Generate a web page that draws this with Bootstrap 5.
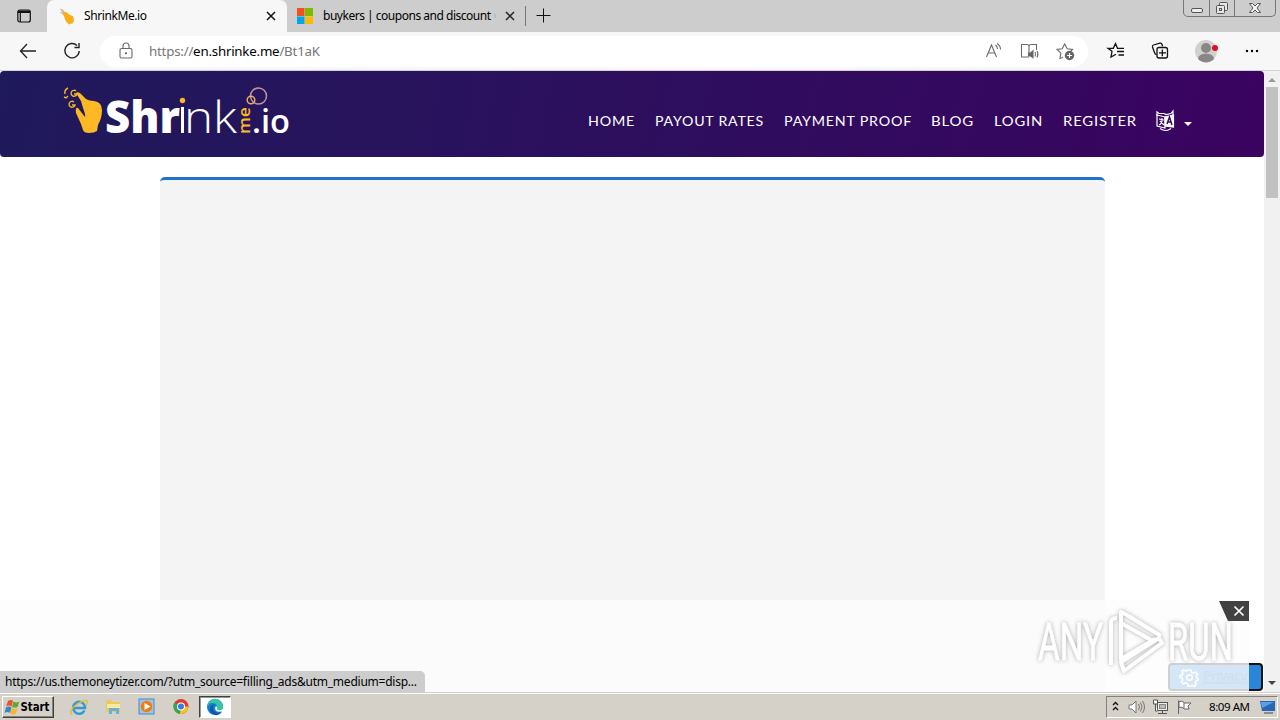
<!DOCTYPE html>
<html lang="en">
<head>
    <meta charset="UTF-8">
    <meta name="viewport" content="width=device-width, initial-scale=1.0">
    <title>ShrinkMe.io</title>
    <link href="https://cdn.jsdelivr.net/npm/bootstrap@5.3.0/dist/css/bootstrap.min.css" rel="stylesheet">
    <style>
        body { width: 1280px; height: 720px; font-family: "Noto Sans", "Open Sans", sans-serif; font-size: 12px; line-height: 16px; color: #000; background: #fff; }
        svg { display: block; flex: none; overflow: visible; }
        svg text { white-space: pre; }

        /* browser chrome */
        .tab-strip { height: 32px; background: #cdcdcd; }
        .tab-menu { width: 47px; border-bottom-right-radius: 6px; }
        .tab-active { width: 240px; background: #f7f7f7; border-radius: 7px 7px 0 0; padding-left: 12px; padding-right: 10px; }
        .tab-other { width: 239px; padding-left: 9px; padding-right: 9px; border-right: 1px solid #777; height: 20px; margin-top: 6px; }
        .win-buttons { width: 93px; height: 17px; border: 1px solid #777; border-top: 0; border-radius: 0 0 5px 5px; margin-right: 4px; }
        .win-buttons > div + div { border-left: 1px solid #777; }
        .toolbar { height: 39px; background: #f7f7f7; border-bottom: 1px solid #d2d2d8; }
        .address { width: 988px; height: 31px; border-radius: 16px; background: #fff; margin-left: 19px; padding: 0 13px 0 18px; }

        /* page */
        .page { height: 621px; background: #fff; }
        .site-nav { height: 86px; border-radius: 4px; padding-left: 60px; background: linear-gradient(100deg, #1f1a5b, #3a0360); }
        .menu { grid-template-columns: 67px 129px 147px 63px 69px 93px 28px 80px; padding-top: 14px; font-family: Lato, sans-serif; font-size: 13px; color: #fff; }
        .menu text { letter-spacing: .7px; }
        .content-box { width: 945px; height: 515px; margin: 20px 0 0 160px; background: #f4f4f4; border-top: 3px solid #1f73cf; border-radius: 5px 5px 0 0; }
        .scroll { width: 16px; background: #f1f1f1; }
        .thumb { width: 12px; height: 111px; background: #c1c1c1; }
        .privacy { right: 1px; bottom: 1px; width: 95px; height: 28px; background: #2a86db; border: 2px solid #111; border-radius: 4px; }
        .ad-bar { left: 0; bottom: 0; width: 1249px; height: 92px; background: rgba(252, 252, 252, .81); }
        .watermark { left: 1030px; bottom: 15px; opacity: .8; filter: drop-shadow(0 0 2px #999); }
        .status-url { left: 0; bottom: 0; width: 425px; height: 21px; background: #cdcdcd; border-top-right-radius: 5px; padding: 2px 5px; }

        /* taskbar */
        .taskbar { height: 28px; background: #d5d0c8; border-top: 1px solid #d5d0c8; box-shadow: inset 0 1px #fff; padding: 3px 2px 2px; }
        .start-btn { width: 52px; height: 22px; padding-left: 1px; border: 1px solid; border-color: #fff #404040 #404040 #fff; box-shadow: inset -1px -1px #87837c; }
        .task-active { width: 32px; height: 22px; background: #fff; border: 1px solid; border-color: #404040 #fff #fff #404040; box-shadow: inset 1px 1px #999; }
        .tray { width: 172px; height: 22px; border: 1px solid; border-color: #85817a #fff #fff #85817a; padding-left: 5px; }
    </style>
</head>
<body class="d-flex flex-column overflow-hidden">
    <header>
        <div class="tab-strip d-flex">
            <div class="tab-menu d-flex align-items-center ps-3">
                <svg width="16" height="16" fill="none" stroke="#111" stroke-width="1.200"><rect x="1.800" y="2" width="12.500" height="12" rx="2"/><path d="M2 3.800h12" stroke-width="2.400"/><path d="M4.300 5v9"/></svg>
            </div>
            <div class="tab-active d-flex align-items-center">
                <svg width="16" height="17"><path d="M2 2l3 1.500 3 1 3 2.500 3 1 1 4-1 3-4 1.500-3-3-2-5z" fill="#f9ad19"/><path d="M1 1l4 2M1 4l4 3M3 1l1 4" stroke="#bbb"/></svg>
                <svg class="ms-2" width="70" height="18"><text x="1" y="13" textLength="63">ShrinkMe.io</text></svg>
                <svg class="ms-auto" width="12" height="12" stroke="#111" stroke-width="1.500"><path d="M2 2l8 8M10 2l-8 8"/></svg>
            </div>
            <div class="tab-other d-flex align-items-center">
                <svg width="17" height="17"><path d="M1 0h7.500v8H1z" fill="#f25022"/><path d="M9 0h8v8H9z" fill="#7fba00"/><path d="M1 8.500h7.500V16H1z" fill="#00a4ef"/><path d="M9 8.500h8V16H9z" fill="#ffb900"/></svg>
                <svg class="ms-2" width="176" height="18"><text x="2" y="13" textLength="168">buykers | coupons and discount</text><path d="M174 7v4" stroke="#aaa"/></svg>
                <svg class="ms-auto" width="12" height="12" stroke="#222" stroke-width="1.500"><path d="M2 2l8 8M10 2l-8 8"/></svg>
            </div>
            <svg class="mt-2" width="18" height="16" style="margin-left: 9px" stroke="#111"><path d="M1.500 7.500h14M8.500 .5v14"/></svg>
            <div class="win-buttons d-flex ms-auto">
                <div class="d-flex justify-content-center" style="width: 25px"><svg width="14" height="15" fill="#eee" stroke="#555"><rect x="1.500" y="8.500" width="11" height="4" rx="1.500"/></svg></div>
                <div class="d-flex justify-content-center" style="width: 25px"><svg width="14" height="15" fill="#e5e5e5" stroke="#555"><rect x="4.500" y="2.500" width="8" height="8" rx="1"/><rect x="1.500" y="5.500" width="8" height="8" rx="1"/><rect x="4.500" y="8.500" width="2" height="2"/></svg></div>
                <div class="d-flex justify-content-center flex-fill"><svg width="14" height="15" fill="#f4f4f4" stroke="#555"><path d="M1.500 3.500h3L7 6l2.500-2.500h3L9 8l3.500 4.500h-3L7 10l-2.500 2.500h-3L5 8z"/></svg></div>
            </div>
        </div>
        <div class="toolbar d-flex align-items-center">
            <svg width="18" height="18" style="margin-left: 19px" fill="none" stroke="#222" stroke-width="1.300"><path d="M17 9H1.500M8 2L1.500 9 8 16"/></svg>
            <svg width="18" height="18" style="margin-left: 26px" fill="none" stroke="#222" stroke-width="1.400"><path d="M14 3.500A7.200 7.200 0 1 0 16.200 9M16 1v4.500h-4.500"/></svg>
            <div class="address d-flex align-items-center">
                <svg width="16" height="18" fill="none" stroke="#6a6a6a" stroke-width="1.100"><rect x="2" y="6.500" width="12" height="9.500" rx="1.500"/><path d="M5 6.500V4a3 3 0 0 1 6 0v2.500"/><circle cx="8" cy="11.300" r=".6" fill="#555"/></svg>
                <svg class="ms-3" width="180" height="22" font-size="13.300"><text y="16" x="-1" textLength="171" fill="#757575">https://<tspan fill="#000">en.shrinke.me</tspan>/Bt1aK</text></svg>
                <svg class="ms-auto" width="18" height="18" fill="none" stroke="#6a6a6a" stroke-width="1.100"><path d="M2.500 15L7.500 3l5 12M4.300 11h6.500M11.500 3q2 1.500 2 4M13 1.500q3.500 2 3.500 6"/></svg>
                <svg width="20" height="18" style="margin-left: 17px" fill="none" stroke="#6a6a6a" stroke-width="1.100"><path d="M10 15H2.500V2.500H8q2 0 2 2V12M10 4.500q0-2 2-2h5.500V8"/><path d="M9.500 11h2l2.500-2.200v7L11.500 14h-2z" fill="#666"/><path d="M16 10q1.200 2.200 0 4.500M18 9q1.800 3.200 0 6.500"/></svg>
                <svg width="19" height="19" style="margin-left: 17px" fill="none" stroke="#6a6a6a" stroke-width="1.100"><path d="M7 15.500l-3 1 .8-5.300L1 7.500l5.200-.8L8.700 2l2.500 4.700 5.300.8-1.500 1.500"/><circle cx="13.500" cy="13.500" r="4.700" fill="#666" stroke="none"/><path d="M11 13.500h5M13.500 11v5" stroke="#fff"/></svg>
            </div>
            <svg width="18" height="18" style="margin-left: 19px" fill="none" stroke="#111" stroke-width="1.300"><path d="M9 12.200L4 15l1-5.700L1 6.300h5.300L8.500 1.500l2 4.800H17M10 9.500h7M11.500 13H17"/></svg>
            <svg width="18" height="18" style="margin-left: 26px" fill="none" stroke="#111" stroke-width="1.300"><path d="M5.500 12.500q-1.500 0-2-2L1.500 5q-.4-1.600 1-2L9 1.200q1.500-.4 2 1l.6 2"/><rect x="6" y="5.500" width="10.500" height="10.500" rx="2"/><path d="M8 10.800h7M11.300 7.500v6.800"/></svg>
            <svg width="24" height="24" style="margin-left: 25px"><circle cx="12" cy="12" r="11" fill="#d2d0ce"/><circle cx="12" cy="9" r="5" fill="#898785"/><path d="M4 20a8 5.500 0 0 1 16 0 11 11 0 0 1-16 0" fill="#898785"/><circle cx="21" cy="9" r="3" fill="#e01020"/></svg>
            <svg width="16" height="6" style="margin-left: 26px"><circle cx="3" cy="3" r="1.200"/><circle cx="8" cy="3" r="1.200"/><circle cx="13" cy="3" r="1.200"/></svg>
        </div>
    </header>

    <div class="page d-flex position-relative">
        <main class="position-relative" style="width: 1264px">
            <nav class="site-nav d-flex align-items-center">
                <!-- logo -->
                <svg width="236" height="60" viewBox="60 82 236 60" style="margin-top: -4px">
                    <path d="M76 93q2-2 5 1l5 5q3 2 8 2 8 1 8 9 0 8-4 15l-1 6q-3 2-8 2-5 0-6-3l-2-6-5-11q-1-6 2-5l7 9q1-1-2-9l-2-7z" fill="#fcb924"/>
                    <g fill="none" stroke="#f5b32b" stroke-width="1.400"><path d="M68 88q-4 2-3 6M64 97l2 1 2-2M76 91a3 3 0 1 0 1 3h-3"/><path d="M74 102a3 3 0 1 0 1 3h-3"/></g>
                    <g fill="#fff" font-family="Open Sans, sans-serif">
                        <text x="105" y="133" font-size="45" font-weight="800" textLength="75" lengthAdjust="spacingAndGlyphs">Shr</text>
                        <text x="184" y="133" font-size="45" font-weight="300" textLength="53" lengthAdjust="spacingAndGlyphs">nk</text>
                        <text x="252" y="133" font-size="33" font-weight="600" textLength="38" lengthAdjust="spacingAndGlyphs">.io</text>
                        <path d="M181 107h3v26h-3z"/>
                        <text transform="translate(249.500 134) rotate(-90)" fill="#fcb924" font-size="16" font-weight="600" textLength="27" lengthAdjust="spacingAndGlyphs">me</text>
                    </g>
                    <circle cx="182.500" cy="100.500" r="2.700" fill="#fcb924"/>
                    <g fill="none" stroke-width="1.500"><circle cx="258.500" cy="96" r="8" stroke="#c29498"/><circle cx="251" cy="100" r="3.800" stroke="#e6ad60"/></g>
                </svg>
                <div class="menu d-grid align-items-center" style="margin-left: 292px">
                    <svg width="60" height="18" fill="#fff"><text y="14" textLength="47" lengthAdjust="spacingAndGlyphs">HOME</text></svg>
                    <svg width="120" height="18" fill="#fff"><text y="14" textLength="109" lengthAdjust="spacingAndGlyphs">PAYOUT RATES</text></svg>
                    <svg width="140" height="18" fill="#fff"><text y="14" textLength="128" lengthAdjust="spacingAndGlyphs">PAYMENT PROOF</text></svg>
                    <svg width="60" height="18" fill="#fff"><text y="14" textLength="43" lengthAdjust="spacingAndGlyphs">BLOG</text></svg>
                    <svg width="60" height="18" fill="#fff"><text y="14" textLength="49" lengthAdjust="spacingAndGlyphs">LOGIN</text></svg>
                    <svg width="85" height="18" fill="#fff"><text y="14" textLength="74" lengthAdjust="spacingAndGlyphs">REGISTER</text></svg>
                    <svg width="20" height="22" fill="none" stroke="#fff" stroke-width="1.200"><path d="M1 6V2l2 1.500h5l2 1 5-1L17 1v4"/><path d="M1 5l8 2v11l-8-2zM3 9l5 1M6 8v2q0 4-3 5M4 11l4 4M4 18.500q6 4 11 0"/><path d="M9 7l8.500-2v12L9 16z" fill="#fff"/><path d="M11 14l2.500-7L16 15M12 12h3" stroke="#33095f" stroke-width="1.500"/></svg>
                    <svg width="9" height="9"><path d="M0 5h8L4 9z" fill="#fff"/></svg>
                </div>
            </nav>
            <div class="content-box"></div>
            <div class="privacy position-absolute d-flex align-items-center">
                <svg width="90" height="24" fill="none" stroke="#fff" stroke-width="1.600"><circle cx="19.500" cy="12.500" r="2.800"/><path d="M18 5h3l.5 2.500 2 .8 2-1.300 2 2-1.300 2 .8 2 1 .5v2l-2 .5-.8 2 1 1.500-2 2-2-1.200-1.700.8L20 21h-2l-.5-2.500-2-.8-2 1.300-2-2 1.300-2-.8-2L10 12.500v-2l2-.5.8-2-1-1.500 2-1.500 2 1 1.700-.8z"/><text x="33" y="16" font-size="14" fill="#1262ac" stroke="none" textLength="45" text-decoration="underline">Privacy</text></svg>
            </div>
        </main>
        <div class="scroll d-flex flex-column align-items-center">
            <svg width="16" height="16"><path d="M4 11l4-4 4 4z" fill="#999"/></svg>
            <div class="thumb"></div>
            <svg class="mt-auto" width="16" height="17"><path d="M4 6h8l-4 4z" fill="#444"/></svg>
        </div>
        <div class="ad-bar position-absolute">
            <svg class="ms-auto" width="30" height="21"><path d="M0 1h30v20H9z" fill="#424242"/><path d="M15.500 6.500l9 9M24.500 6.500l-9 9" stroke="#fff" stroke-width="1.700"/></svg>
        </div>
        <svg class="watermark position-absolute" width="210" height="72" viewBox="1030 604 210 72">
            <g fill="#fff" stroke="#fff" stroke-width=".8" font-family="Roboto, sans-serif" font-size="52">
                <text x="1038" y="659" textLength="65" lengthAdjust="spacingAndGlyphs">ANY</text>
                <text x="1168" y="659" textLength="65" lengthAdjust="spacingAndGlyphs">RUN</text>
            </g>
            <g fill="none" stroke="#fff" stroke-width="4" stroke-linejoin="round"><path d="M1161 635l-34-21-6-3v47l34-20"/><path d="M1121 622l30 17M1117 617q-6 0-6 5v42M1124 670l38-28-3-5-38 24z"/></g>
        </svg>
        <div class="status-url position-absolute">
            <svg width="415" height="18"><text y="13" textLength="412">https://us.themoneytizer.com/?utm_source=filling_ads&amp;utm_medium=disp...</text></svg>
        </div>
    </div>

    <footer class="taskbar d-flex">
        <div class="start-btn d-flex align-items-center">
            <svg width="16" height="16"><path d="M4 2q3-2 5 0L7.500 7.500Q4.500 5.500 2 7.500z" fill="#e3562c"/><path d="M9.500 2.500q3 2 6 0l-2 5.500q-3 1-5.500 0z" fill="#61a82f"/><path d="M2 8.500q3-2 5.500 0L6 14q-2.500-2-5.500 0z" fill="#3584cc"/><path d="M8 9q3 2 5.500 0L12 14.500q-3 2-5.500 0z" fill="#f5ba22"/></svg>
            <svg width="32" height="18" font-family="DejaVu Sans Condensed, DejaVu Sans, sans-serif" font-weight="700"><text y="13" x=".5" textLength="29" lengthAdjust="spacingAndGlyphs">Start</text></svg>
        </div>
        <!-- quick launch -->
        <svg width="18" height="19" style="margin: 2px 0 0 16px" fill="none"><path d="M14.500 12.500A6 6 0 1 1 15 8.500v1.500H4" stroke="#329bd7" stroke-width="2.500"/><path d="M2 17Q-2 13 6 7q9-6 11-4 1 1-1 4" stroke="#e9bb35" stroke-width="1.400"/></svg>
        <svg width="18" height="19" style="margin: 1px 0 0 16px"><path d="M2 3h5l1 2h8v10H2z" fill="#edc95d"/><path d="M3 7h13v4H3z" fill="#f8e9a0"/><path d="M5 17v-6h10v6h-3v-3H8v3z" fill="#62b3d8"/></svg>
        <svg width="18" height="19" style="margin: 1px 0 0 16px"><rect x="1" y="2" width="15" height="15" fill="#9ac4e9" stroke="#478bc4"/><circle cx="8.500" cy="9.500" r="5.700" fill="#f07c0b"/><path d="M6.500 6l6 3.500-6 3.500z" fill="#fff"/></svg>
        <svg width="18" height="19" style="margin: 1px 0 0 16px"><circle cx="9" cy="9.500" r="7.500" fill="#e23a2e"/><path d="M9 9.500L2.500 5.500a7.500 7.500 0 0 0 5.500 11.400z" fill="#31a852"/><path d="M9 9.500h7.400a7.500 7.500 0 0 1-8.400 7.400z" fill="#fbc116"/><circle cx="9" cy="9.500" r="4" fill="#fff"/><circle cx="9" cy="9.500" r="3" fill="#3b78e7"/></svg>
        <div class="task-active d-flex align-items-center justify-content-center" style="margin-left: 9px">
            <svg width="18" height="18"><circle cx="9" cy="9" r="8" fill="#147fd2"/><path d="M2 6Q5 0 11 1q6 2 6 8 0 3-4 3-3 0-2-3 0-4-5-4-3 0-4 3z" fill="#36c5a1"/><path d="M9 6q-4 3-1 7 3 3 8 1-3 4-7 3-6-2-5-7 1-3 5-4" fill="#0c59a4"/><path d="M10 8q2 1 1 3 1 2.500 6 0v2q-6 2-7.500-1-1-2 .5-4" fill="#fff"/></svg>
        </div>
        <div class="tray d-flex align-items-center ms-auto">
            <svg width="8" height="12" fill="none" stroke="#111" stroke-width="1.300"><path d="M1 4l2.500-2.500L6 4M1 9l2.500-2.500L6 9"/></svg>
            <svg width="18" height="16" style="margin-left: 8px" fill="#fff" stroke="#777"><path d="M1 6h3l4-4v12l-4-4H1z"/><path d="M10.500 5q2 3 0 6M12.500 3.500q3 4 0 9M14.500 2q4 6 0 12" fill="none"/></svg>
            <svg width="18" height="16" style="margin-left: 6px" fill="#eee" stroke="#555"><rect x="5.500" y="3.500" width="10" height="8"/><rect x="7.500" y="5.500" width="6" height="4" fill="#bbb" stroke="#888"/><path d="M6 14.500h9M10.500 12v2" fill="none"/><path d="M1.500 1v4h4V1zM3.500 5v7h2" fill="#fff"/></svg>
            <svg width="18" height="16" style="margin-left: 6px" fill="#fff" stroke="#666"><path d="M2.500 15V1.500M3 2.500q3-1 5 1v6q-2-2-5-1zM8 4h7l-3 3 1 3H8"/></svg>
            <svg width="44" height="18" style="margin-left: 15px" font-size="11.500"><text x="0" y="13" textLength="41">8:09 AM</text></svg>
            <svg width="17" height="16" style="margin-left: 6px"><path d="M1 2h15v10H3z" fill="#2767b8"/><path d="M2 3h13L3 9z" fill="#5ba0e5"/><path d="M5 14h9" stroke="#444"/></svg>
        </div>
    </footer>
    <script src="https://cdn.jsdelivr.net/npm/bootstrap@5.3.0/dist/js/bootstrap.bundle.min.js"></script>
</body>
</html>
